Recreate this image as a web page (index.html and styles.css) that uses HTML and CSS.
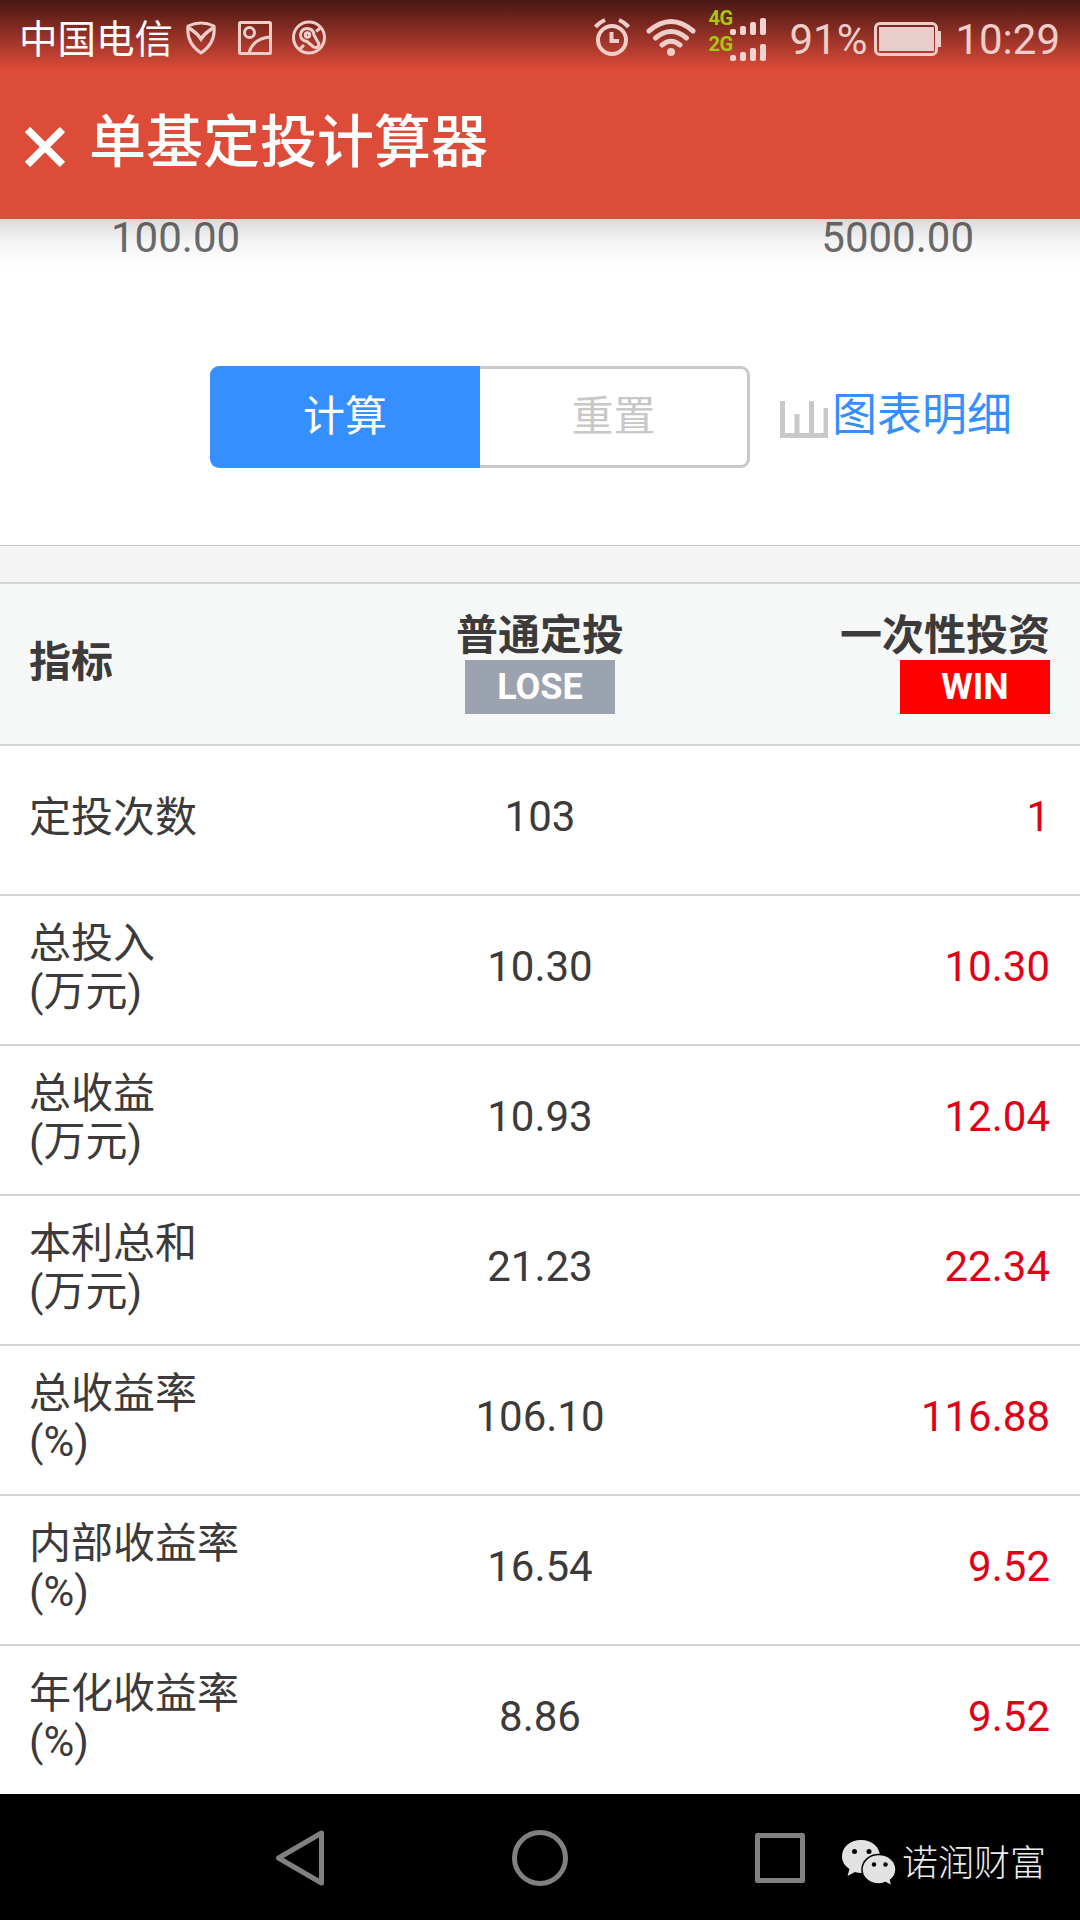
FILE: index.html
```
<!DOCTYPE html>
<html lang="zh-CN">
<head>
    <meta charset="UTF-8">
    <meta name="viewport" content="width=device-width, initial-scale=1.0">
    <title>单基定投计算器</title>
    <link rel="stylesheet" href="styles.css">
</head>
<body>
    <header class="header">
        <div class="status-bar">
            <span class="carrier">中国电信</span>
            <svg class="status-left" width="142" height="36" viewBox="0 0 142 36" fill="none" stroke="currentColor" stroke-width="3">
                <path d="M3 6Q16 0 29 6Q31 23 16 33Q1 23 3 6Z" stroke-linejoin="round"/>
                <path d="M4 8Q12 13 16 19Q20 13 28 8" stroke-width="3.500"/>
                <rect x="54.500" y="2.500" width="31" height="31" rx="1"/>
                <circle cx="64.500" cy="12.500" r="5"/>
                <path d="M64 33Q68 18 86 17"/>
                <circle cx="124" cy="17.500" r="15.500"/>
                <path d="M122 21.500Q115.500 20.500 115.500 14.500Q116.500 8.500 122.500 8.500Q128.500 9 129 15L134 24Q133 29 128.500 27Z" stroke-linejoin="round"/>
                <circle cx="122.500" cy="15" r="2.200"/>
                <path d="M115 29L119 25M131 11.500L136 7.500"/>
            </svg>
            <div class="status-right">
                <svg class="alarm" width="38" height="40" viewBox="0 0 38 40" fill="none" stroke="currentColor" stroke-width="4">
                    <circle cx="19" cy="22" r="14"/>
                    <path d="M18.500 14V23H26M2.500 9Q6 4.500 12 2M35.500 9Q32 4.500 26 2"/>
                </svg>
                <svg class="wifi" width="50" height="40" viewBox="0 0 50 40" fill="none" stroke="currentColor" stroke-width="5" stroke-linecap="round">
                    <path d="M3 13Q25 -6 47 13M9.500 20Q25 7 40.500 20M16 27Q25 19.500 34 27"/>
                    <circle cx="25" cy="34" r="4" fill="currentColor" stroke="none"/>
                </svg>
                <div class="signals">
                    <div class="signal"><b>4G</b><i class="b1"></i><i class="b2"></i><i class="b3"></i><i class="b4"></i></div>
                    <div class="signal"><b>2G</b><i class="b1"></i><i class="b2"></i><i class="b3"></i><i class="b4"></i></div>
                </div>
                <span class="percent">91%</span>
                <div class="battery"><div class="level"></div></div>
                <span class="time">10:29</span>
            </div>
        </div>
        <div class="title-bar">
            <svg class="close" width="40" height="40" viewBox="0 0 40 40" stroke="#fff" stroke-width="7.500">
                <path d="M2.500 2.500L37.500 37.500M37.500 2.500L2.500 37.500"/>
            </svg>
            <h1>单基定投计算器</h1>
        </div>
    </header>

    <main>
        <div class="range">
            <span>100.00</span>
            <span>5000.00</span>
        </div>
        <div class="actions">
            <div class="buttons">
                <button class="primary">计算</button>
                <button class="reset">重置</button>
            </div>
            <a class="detail">
                <svg width="48" height="37" viewBox="0 0 48 37" fill="none" stroke="#c8c8c8" stroke-width="5">
                    <path d="M2.500 0V34.500H48M17 13V34M31.500 0V34M46 7V34"/>
                </svg>
                <span>图表明细</span>
            </a>
        </div>
        <div class="gap"></div>
        <table>
            <thead>
                <tr>
                    <th>指标</th>
                    <th>普通定投<span class="tag lose">LOSE</span></th>
                    <th>一次性投资<span class="tag win">WIN</span></th>
                </tr>
            </thead>
            <tbody>
                <tr><td>定投次数</td><td>103</td><td>1</td></tr>
                <tr><td>总投入<br>(万元)</td><td>10.30</td><td>10.30</td></tr>
                <tr><td>总收益<br>(万元)</td><td>10.93</td><td>12.04</td></tr>
                <tr><td>本利总和<br>(万元)</td><td>21.23</td><td>22.34</td></tr>
                <tr><td>总收益率<br>(%)</td><td>106.10</td><td>116.88</td></tr>
                <tr><td>内部收益率<br>(%)</td><td>16.54</td><td>9.52</td></tr>
                <tr><td>年化收益率<br>(%)</td><td>8.86</td><td>9.52</td></tr>
            </tbody>
        </table>
    </main>

    <nav class="nav-bar">
        <svg class="nav-keys" width="532" height="60" viewBox="0 0 532 60" fill="none" stroke="#808080" stroke-width="5" stroke-linejoin="round">
            <path d="M3.500 30L46.500 5V55Z"/>
            <circle cx="265" cy="30" r="25.500"/>
            <rect x="482.500" y="7.500" width="45" height="45"/>
        </svg>
        <div class="account">
            <svg width="56" height="48" viewBox="0 0 56 48">
                <path fill="#e2e2e2" d="M20 1C9 1 1 8 1 17.500C1 23 4 27 8.500 30L6.500 37L14 33Q17 34 20 34C31 34 39 27 39 17.500S31 1 20 1Z"/>
                <path fill="#e2e2e2" stroke="#000" stroke-width="1.500" d="M38 15.500C28.500 15.500 21 22 21 30.500S28.500 45 38 45Q42 45 44.500 43.500L51 47L49.500 41C53 38.500 55 35 55 30.500C55 22 47.500 15.500 38 15.500Z"/>
                <circle cx="13.500" cy="12.500" r="2.500"/>
                <circle cx="28" cy="12.500" r="2.500"/>
                <circle cx="33" cy="25.500" r="2.200"/>
                <circle cx="44.500" cy="25.500" r="2.200"/>
            </svg>
            <span>诺润财富</span>
        </div>
    </nav>
</body>
</html>
```
FILE: styles.css
```
* {
    box-sizing: border-box;
}

body {
    margin: 0;
    height: 1920px;
    display: flex;
    flex-direction: column;
    font-family: Roboto, "Noto Sans CJK SC", sans-serif;
    font-size: 42px;
    color: #3c3a3a;
    background-color: #fff;
    overflow: hidden;
}

.header {
    position: relative;
    height: 219px;
    color: #fff;
    background: linear-gradient(#4c1813 0, #5c1e18 10px, #dd4b39 70px, #dd4b39 100%);
    border-bottom: 3px solid #d35138;
}

/* shadow under the title bar */
.header::after {
    content: "";
    position: absolute;
    left: 0;
    right: 0;
    top: 219px;
    height: 46px;
    border-top: 3px solid rgba(90, 70, 40, 0.2);
    background: linear-gradient(rgba(0, 0, 0, 0.13), rgba(0, 0, 0, 0.04) 45%, rgba(0, 0, 0, 0));
    background-clip: padding-box;
}

.status-bar {
    height: 75px;
    padding: 0 20px 0 19px;
    display: flex;
    align-items: center;
    color: #f0cdc9;
}

.carrier {
    color: #fff;
    font-size: 38.5px;
    line-height: 75px;
    margin-right: 12px;
    padding-top: 4px;
}

.status-right {
    margin-left: auto;
    display: flex;
    align-items: center;
}

.wifi {
    margin-left: 15px;
}

.signals {
    margin: 0 23px 0 12px;
}

.signal {
    height: 26px;
    display: flex;
    align-items: flex-end;
    gap: 4px;
    padding-bottom: 3px;
}

.signal b {
    width: 18px;
    font-size: 20px;
    line-height: 26px;
    color: #a6c80c;
    letter-spacing: -0.5px;
    padding-bottom: 4px;
}

.signal i {
    width: 6px;
    border-radius: 2px;
    background-color: #f3d3cf;
}

.b1 { height: 6px; }
.b2 { height: 9px; }
.b3 { height: 13px; }
.b4 { height: 17px; }

.percent,
.time {
    font-size: 42px;
    line-height: 75px;
    padding-top: 4px;
}

.battery {
    position: relative;
    width: 64px;
    height: 34px;
    margin: 2px 17px 0 7px;
    padding: 2px;
    border: 3px solid #f0cdc9;
    border-radius: 6px;
}

.battery::after {
    content: "";
    position: absolute;
    right: -6px;
    top: 6px;
    width: 4px;
    height: 16px;
    background-color: #f0cdc9;
}

.level {
    width: 55px;
    height: 100%;
    background-color: #e9cdcd;
}

.title-bar {
    height: 141px;
    display: flex;
    align-items: center;
    padding: 0 0 5px 25px;
}

.close {
    margin: 7px 24px 0 0;
}

h1 {
    margin: 0;
    font-size: 57px;
    line-height: 80px;
    font-weight: 500;
}

main {
    height: 1575px;
}

.range {
    height: 147px;
    padding: 0 106px 0 111px;
    display: flex;
    justify-content: space-between;
    line-height: 37px;
    color: #6e6e6e;
}

.actions {
    height: 179px;
    display: flex;
    align-items: flex-start;
    padding-left: 210px;
}

.buttons {
    width: 540px;
    height: 102px;
    display: flex;
}

button {
    width: 50%;
    padding: 0 0 9px;
    font: inherit;
    border: none;
}

.primary {
    color: #fff;
    background-color: #368fff;
    border-radius: 9px 0 0 9px;
}

.reset {
    color: #c8c8c8;
    background-color: #fff;
    border: 3px solid #c8c8c8;
    border-left: none;
    border-radius: 0 9px 9px 0;
}

.detail {
    display: flex;
    align-items: center;
    height: 91px;
    margin-left: 30px;
    font-size: 45px;
    color: #368fff;
}

.detail svg {
    margin: 15px 4px 0 0;
}

.gap {
    height: 37px;
    background-color: #f4f4f4;
    border-top: 1px solid #c8c8c8;
}

table {
    width: 100%;
    table-layout: fixed;
    border-collapse: collapse;
    line-height: 48px;
}

th,
td {
    width: 33.33%;
    height: 150px;
    padding: 0 30px 7px;
    text-align: center;
    vertical-align: middle;
    border-top: 2px solid #d4d4d4;
}

th {
    height: 162px;
    padding-bottom: 3px;
    font-weight: bold;
    background-color: #f6f8f7;
}

th:first-child,
td:first-child {
    padding-left: 29px;
    text-align: left;
}

td:first-child {
    padding-bottom: 5px;
}

th:last-child,
td:last-child {
    text-align: right;
}

td:last-child {
    color: #df0216;
}

.tag {
    display: block;
    width: 150px;
    height: 54px;
    margin: 0 auto;
    color: #fff;
    font-size: 36px;
    line-height: 54px;
    text-align: center;
}

.lose {
    background-color: #9ba3b1;
}

.win {
    margin-right: 0;
    background-color: #fe0000;
}

.nav-bar {
    height: 126px;
    display: flex;
    align-items: center;
    padding-left: 275px;
    background-color: #000;
}

.nav-keys {
    margin-top: 2px;
}

.account {
    display: flex;
    align-items: center;
    margin: 12px 0 0 34px;
    color: #ececec;
    font-size: 36px;
    font-weight: 300;
}

.account span {
    margin: 2px 0 0 5px;
    line-height: 48px;
}
```
